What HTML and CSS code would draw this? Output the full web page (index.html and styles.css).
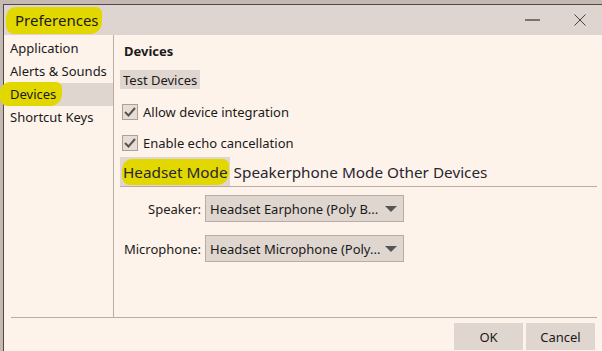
FILE: index.html
```html
<!DOCTYPE html>
<html lang="en">
<head>
  <meta charset="UTF-8" />
  <meta name="viewport" content="width=device-width, initial-scale=1.0"/>
  <title>Preferences</title>
  <link rel="stylesheet" href="styles.css">
</head>
<body>

  <div class="window">
    <div class="titlebar">
      <span class="title"><span class="marker marker-title">Preferences</span></span>
      <div class="controls">
        <span class="minimize"></span>
        <svg class="close" width="12" height="12" viewBox="0 0 12 12">
          <path d="M0.5 0.5 L11.5 11.5 M11.5 0.5 L0.5 11.5" stroke="#444" stroke-width="1" fill="none"/>
        </svg>
      </div>
    </div>

    <div class="main">
      <ul class="nav">
        <li>Application</li>
        <li>Alerts &amp; Sounds</li>
        <li class="active"><span class="marker marker-nav">Devices</span></li>
        <li>Shortcut Keys</li>
      </ul>

      <div class="panel">
        <h2>Devices</h2>
        <button class="btn test">Test Devices</button>

        <label class="check"><span class="box"><svg width="12" height="10" viewBox="0 0 12 10"><path d="M1 5 L4.5 8.5 L11 1" stroke="#5a5552" stroke-width="2" fill="none"/></svg></span>Allow device integration</label>
        <label class="check"><span class="box"><svg width="12" height="10" viewBox="0 0 12 10"><path d="M1 5 L4.5 8.5 L11 1" stroke="#5a5552" stroke-width="2" fill="none"/></svg></span>Enable echo cancellation</label>

        <div class="tabs">
          <span class="tab active"><span class="marker marker-tab">Headset Mode</span></span>
          <span class="tab">Speakerphone Mode</span>
          <span class="tab">Other Devices</span>
        </div>

        <div class="fields">
          <span class="field-label">Speaker:</span>
          <div class="combo"><span>Headset Earphone (Poly B...</span><i class="arrow"></i></div>
          <span class="field-label">Microphone:</span>
          <div class="combo"><span>Headset Microphone (Poly...</span><i class="arrow"></i></div>
        </div>
      </div>
    </div>

    <div class="footer">
      <button class="btn action">OK</button>
      <button class="btn action">Cancel</button>
    </div>
  </div>

</body>
</html>
```

FILE: styles.css
```css
body {
  font-family: 'Noto Sans', 'Open Sans', sans-serif;
  font-size: 13px;
  color: #1a1a1a;
  background: #c5b9b1;
  margin: 0;
  height: 351px;
  overflow: hidden;
}

.window {
  margin: 4px 0 0 3px;
  border-top: 1px solid #4e4a48;
  border-left: 1px solid #4e4a48;
  background: #fef3ea;
  height: 346px;
}

/* title bar */
.titlebar {
  height: 30px;
  background: #ded5d0;
  display: flex;
  align-items: center;
  justify-content: space-between;
}

.title {
  font-size: 15px;
  padding-left: 11px;
}

.controls {
  display: flex;
  align-items: center;
  gap: 34px;
  padding-right: 16px;
}

.minimize {
  display: block;
  width: 15px;
  height: 2px;
  background: #7a7470;
}

.close {
  display: block;
}

/* highlighter marks */
.marker {
  background: #e2d800;
  border-radius: 10px 6px 12px 8px;
}

.marker-title {
  padding: 3px 3px 4px 9px;
  margin-left: -9px;
}

.marker-nav {
  padding: 3px 6px 3px 10px;
  margin-left: -10px;
}

.marker-tab {
  padding: 3px 1px;
  margin-left: -2px;
}

/* layout */
.main {
  display: flex;
  height: 282px;
}

.nav {
  list-style: none;
  margin: 0;
  padding: 2px 0 0 2px;
  width: 107px;
  border-right: 1px solid #b8aca4;
}

.nav li {
  height: 23px;
  line-height: 23px;
  padding-left: 4px;
  white-space: nowrap;
}

.nav li.active {
  background: #e0d6d0;
}

.panel {
  flex: 1;
  padding: 8px 5px 0 6px;
}

.panel h2 {
  font-size: 13px;
  font-weight: bold;
  margin: 0 0 0 4px;
  line-height: 16px;
}

.btn {
  font-family: inherit;
  font-size: 13px;
  color: #1a1a1a;
  background: #e0d6d0;
  border: none;
  padding: 0;
  cursor: pointer;
}

.test {
  margin-top: 11px;
  height: 19px;
  padding: 0 3px;
  display: block;
}

.check {
  display: flex;
  align-items: center;
  gap: 5px;
  height: 16px;
  margin-top: 15px;
  padding-left: 2px;
}

.check + .check {
  margin-top: 15px;
}

.box {
  width: 14px;
  height: 14px;
  border: 1px solid #aaa19b;
  background: #e6ddd7;
  display: flex;
  align-items: center;
  justify-content: center;
}

.tabs {
  display: flex;
  gap: 4px;
  margin-top: 6px;
  height: 29px;
  border-bottom: 1px solid #b8aca4;
  font-size: 15.3px;
  color: #262632;
  align-items: stretch;
}

.tab {
  display: flex;
  align-items: center;
  padding: 0;
}

.tab.active {
  background: #e0d6d0;
  padding: 0 1px 0 4px;
}

.fields {
  display: grid;
  grid-template-columns: 78px 199px;
  column-gap: 4px;
  row-gap: 13px;
  align-items: center;
  margin-top: 8px;
  padding-left: 3px;
}

.field-label {
  text-align: right;
  white-space: nowrap;
}

.combo {
  height: 25px;
  background: #e0d6d0;
  border: 1px solid #b8aca4;
  display: flex;
  align-items: center;
  justify-content: space-between;
  padding: 0 6px 0 4px;
  white-space: nowrap;
}

.arrow {
  width: 0;
  height: 0;
  border-left: 6px solid transparent;
  border-right: 6px solid transparent;
  border-top: 6px solid #555;
}

/* footer */
.footer {
  margin: 0 5px 0 7px;
  border-top: 1px solid #b8aca4;
  display: flex;
  justify-content: flex-end;
  gap: 3px;
  padding: 5px 2px 0 0;
}

.action {
  width: 69px;
  height: 27px;
}
```
